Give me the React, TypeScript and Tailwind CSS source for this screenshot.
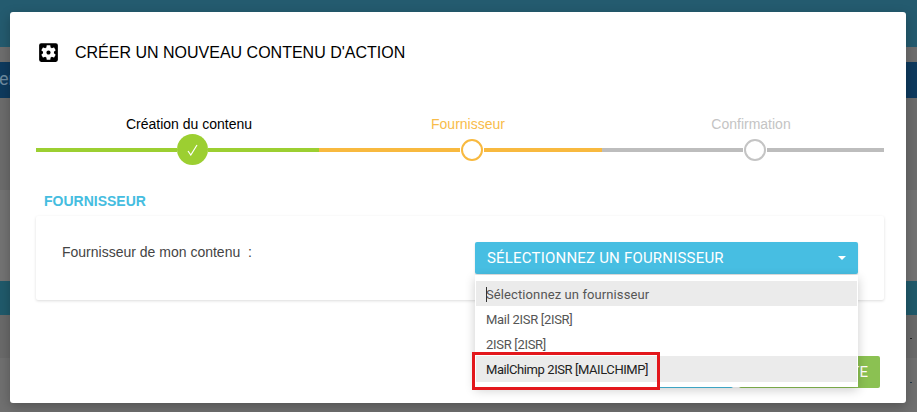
import { MdSettingsApplications } from "react-icons/md";

const options = [
  { label: "Sélectionnez un fournisseur", cls: "bg-[#ebebeb] text-[#555555] h-[25px] tracking-[0.1px]" },
  { label: "Mail 2ISR [2ISR]", cls: "text-[#555555] h-[25px] tracking-[-0.3px]" },
  { label: "2ISR [2ISR]", cls: "text-[#555555] h-[25px] tracking-[-0.3px]" },
  { label: "MailChimp 2ISR [MAILCHIMP]", cls: "bg-[#ebebeb] text-[#222222] h-[26px] tracking-[-0.42px]" },
];

function Stepper() {
  return (
    <div className="mt-[49px] ml-[26px] w-[848px] font-['Liberation_Sans',sans-serif] text-sm">
      <div className="flex h-[20px] items-center">
        <div className="w-[283px] shrink-0 pl-[23px] text-center text-black">Création du contenu</div>
        <div className="w-[283px] shrink-0 pl-[15px] text-center text-[#f8bc4a]">Fournisseur</div>
        <div className="w-[282px] shrink-0 pl-[16px] text-center text-[#c4c4c4]">Confirmation</div>
      </div>
      <div className="flex h-[31px] items-center">
        {/* done */}
        <div className="flex w-[283px] shrink-0 items-center">
          <div className="h-1 w-[141px] bg-[#9ccf31]" />
          <div className="flex h-[31px] w-[31px] shrink-0 items-center justify-center rounded-full bg-[#9ccf31]">
            <svg width="11" height="12" viewBox="0 0 11 12" fill="none">
              <path d="M1 7 L3.8 11 L10 1" stroke="white" strokeWidth="1.2" />
            </svg>
          </div>
          <div className="h-1 flex-1 bg-[#9ccf31]" />
        </div>
        {/* current */}
        <div className="flex w-[283px] shrink-0 items-center">
          <div className="h-1 w-[141px] bg-[#f8b93f]" />
          <div className="ml-[1px] h-[22px] w-[22px] shrink-0 rounded-full border-2 border-[#f8b93f]" />
          <div className="ml-[1px] h-1 flex-1 bg-[#f8b93f]" />
        </div>
        {/* todo */}
        <div className="flex w-[282px] shrink-0 items-center">
          <div className="h-1 w-[141px] bg-[#bdbdbd]" />
          <div className="ml-[1px] h-[22px] w-[22px] shrink-0 rounded-full border-2 border-[#c4c4c4]" />
          <div className="ml-[1px] h-1 flex-1 bg-[#bdbdbd]" />
        </div>
      </div>
    </div>
  );
}

export default function App() {
  return (
    <div className="relative h-[412px] w-[917px] overflow-hidden bg-[#6c6c6c]">
      {/* page behind the overlay */}
      <div className="flex flex-col">
        <div className="h-[47px] bg-[#245b6f]" />
        <div className="h-[15px] bg-[#6e6e6e]" />
        <div className="h-[36px] bg-[#0e3a5e] pt-[6px] font-['Roboto',sans-serif] text-lg leading-[22px] text-[#6f8ba0]">
          <span className="-ml-[1px]">en</span>
        </div>
        <div className="h-[92px] bg-[#6c6c6c]" />
        <div className="h-[91px] bg-[#737373]" />
        <div className="h-[34px] bg-[#205a6b]" />
        <div className="relative h-[43px] bg-[#6a6a6a]">
          <div className="absolute top-[23px] right-[5px] h-px w-[2px] bg-[#222222]" />
        </div>
        <div className="relative h-[54px] bg-[#707070]">
          <div className="absolute top-[24px] right-[5px] h-px w-[2px] bg-[#22384a]" />
        </div>
      </div>

      {/* modal */}
      <div className="absolute top-[12px] left-[10px] flex h-[391px] w-[896px] flex-col rounded-[3px] bg-white shadow-[0_4px_12px_rgba(0,0,0,0.25)]">
        <div className="flex items-center pt-[28px] pl-[26px]">
          <MdSettingsApplications className="h-[25px] w-[25px] text-black" />
          <h1 className="ml-[14px] font-['Liberation_Sans',sans-serif] text-base leading-[25px] text-black">
            CRÉER UN NOUVEAU CONTENU D'ACTION
          </h1>
        </div>

        <Stepper />

        <h2 className="mt-[26px] ml-[34px] font-['Liberation_Sans',sans-serif] text-sm leading-[20px] font-bold text-[#45bde0]">
          FOURNISSEUR
        </h2>

        {/* card */}
        <div className="mt-[5px] ml-[26px] flex h-[84px] w-[848px] rounded-[2px] bg-white pt-[26px] pr-[26px] pl-[26px] shadow-[0_1px_3px_rgba(0,0,0,0.14)]">
          <div className="w-[413px] font-['Liberation_Sans',sans-serif] text-sm leading-[20px] whitespace-pre text-[#444444]">
            Fournisseur de mon contenu  :
          </div>
          <div className="flex h-[32px] flex-1 items-center justify-between rounded-[2px] bg-[#47bee2] pr-[12px] pl-[12px] font-['Roboto',sans-serif] text-[15px] tracking-[0.2px] text-white shadow-[0_1px_2px_rgba(0,0,0,0.15)]">
            <span>SÉLECTIONNEZ UN FOURNISSEUR</span>
            <span className="h-0 w-0 border-x-[4px] border-t-[4px] border-x-transparent border-t-white" />
          </div>
        </div>

        {/* footer buttons, mostly hidden by the open menu */}
        <div className="mt-auto mb-[15px] flex h-[32px] justify-end gap-[6px] pr-[26px] font-['Roboto',sans-serif] text-[15px] text-white">
          <div className="w-[84px] rounded-[2px] bg-[#e53935]" />
          <div className="w-[167px] rounded-[2px] bg-[#47bee2]" />
          <div className="flex w-[141px] items-center justify-end rounded-[2px] bg-[#8bc152] pr-[12px]">
            SUIVANTE
          </div>
        </div>
      </div>

      {/* open select menu */}
      <div className="absolute top-[275px] left-[475px] w-[383px] bg-white px-px pt-[6px] pb-[5px] font-['Roboto',sans-serif] text-[13px] shadow-[0_3px_10px_rgba(0,0,0,0.2)]">
        {options.map((o, i) => (
          <div key={o.label} className={`relative flex items-center pt-[2px] pl-[10px] ${o.cls}`}>
            {i === 0 && <span className="absolute top-[6px] left-[10px] h-[15px] w-px bg-[#333333]" />}
            {o.label}
          </div>
        ))}
      </div>

      {/* annotation */}
      <div className="absolute top-[352px] left-[472px] h-[38px] w-[188px] border-[3px] border-[#e3171c]" />
    </div>
  );
}
